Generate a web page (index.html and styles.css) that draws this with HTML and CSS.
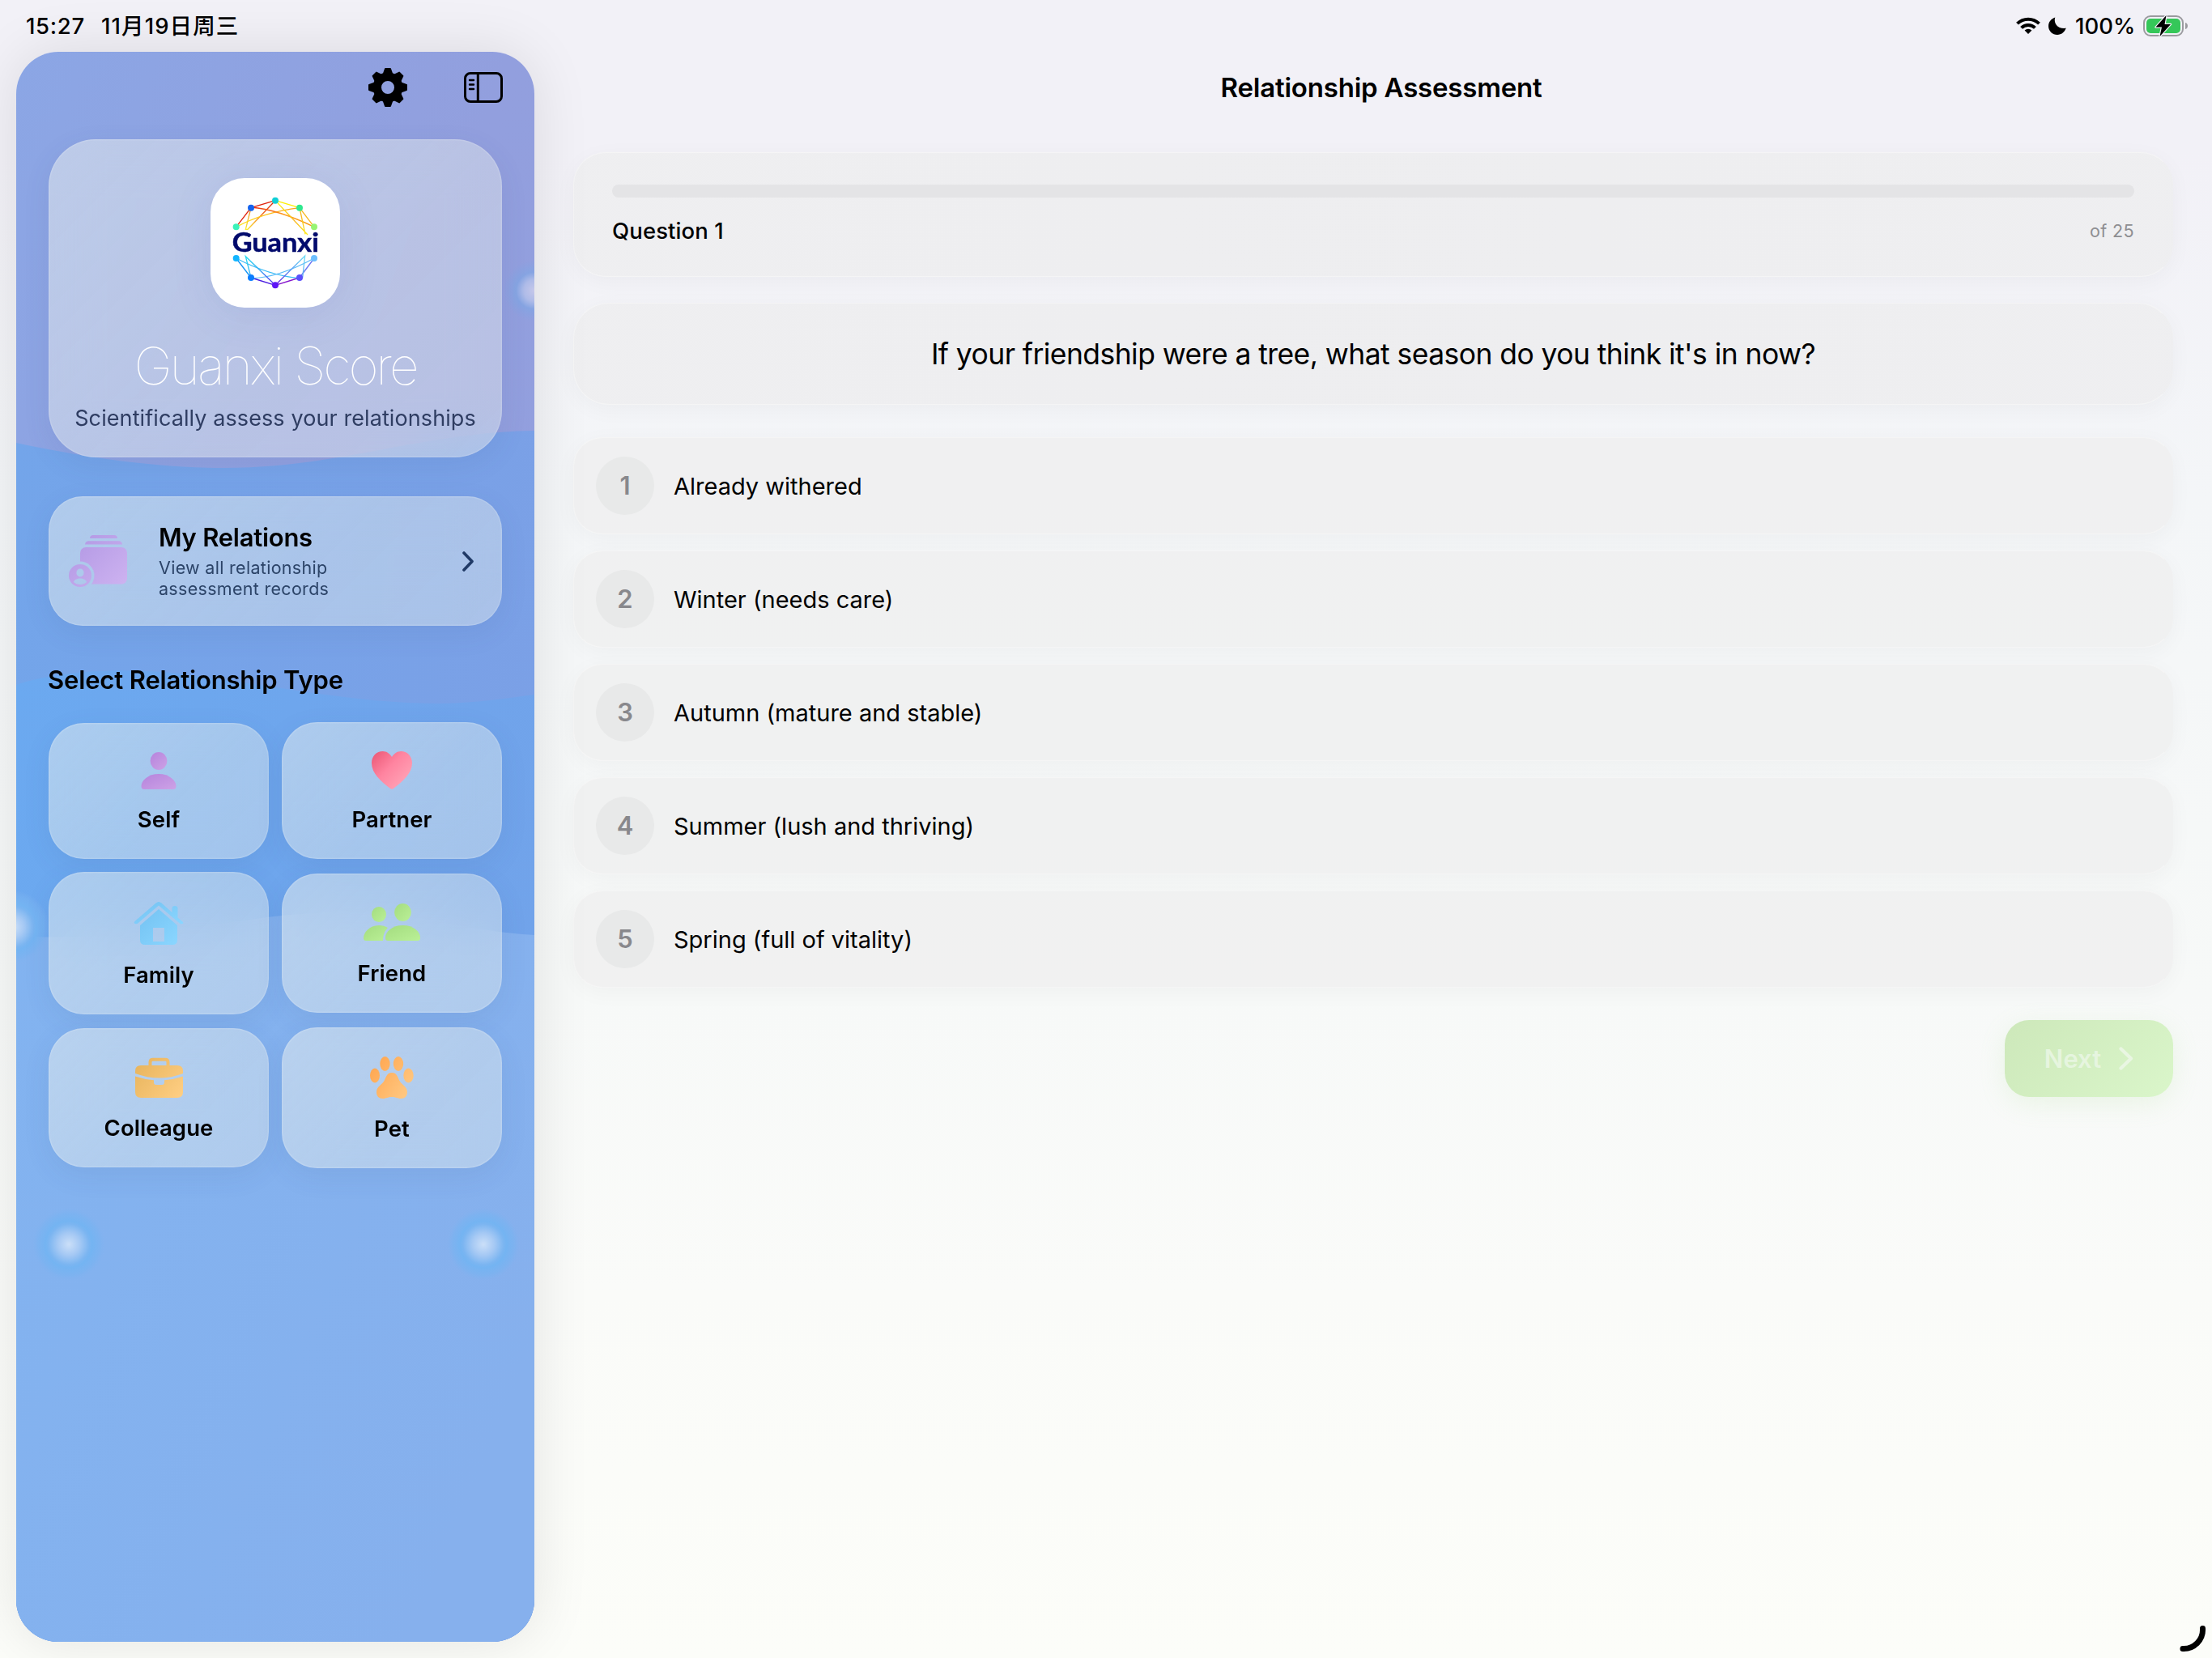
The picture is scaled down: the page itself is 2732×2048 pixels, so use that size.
FILE: index.html
```html
<!DOCTYPE html>
<html lang="en">
<head>
    <meta charset="UTF-8">
    <title>Guanxi Score</title>
    <link rel="stylesheet" href="styles.css">
</head>
<body>

    <!-- Status bar -->
    <header class="status-bar">
        <div class="status-left">
            <span class="status-time">15:27</span>
            <span class="status-date">11月19日周三</span>
        </div>
        <div class="status-right">
            <svg class="wifi" width="30" height="22" viewBox="0 0 30 22">
                <g fill="none" stroke="#000" stroke-width="4">
                    <path d="M1.5 8.2a19.2 19.2 0 0 1 27 0"/>
                    <path d="M6.6 13.4a12 12 0 0 1 16.8 0"/>
                </g>
                <path d="M15 21l-4.4-4.4a6.3 6.3 0 0 1 8.8 0z"/>
            </svg>
            <svg class="moon" width="22" height="22" viewBox="0 0 22 22">
                <path d="M8.3 0.4C6.2 6.800 10 15 21.700 13.800C19.800 18.800 16 22 11 22C5 22 0 17.200 0 11.200C0 6.200 3.200 2 8.300 0.400z"/>
            </svg>
            <span class="battery-text">100%</span>
            <svg class="battery" width="56" height="28" viewBox="0 0 56 28">
                <rect x="1" y="2" width="48" height="24" rx="8" fill="none" stroke="#9b9b9f" stroke-width="2"/>
                <rect x="4" y="5" width="42" height="18" rx="5" fill="#35c759"/>
                <path d="M52 10c4 1 4 7 0 8z" fill="#9b9b9f"/>
                <path d="M28.500 1L15.500 15.500H23L20.500 27L34 12H26.500z" fill="#000" stroke="#f1f0f6" stroke-width="2.400" paint-order="stroke" stroke-linejoin="round"/>
            </svg>
        </div>
    </header>

    <div class="app">

        <!-- Sidebar -->
        <aside class="sidebar">
            <svg class="waves" width="640" height="1964" viewBox="0 0 640 1964">
                <defs>
                    <linearGradient id="wave-top" x1="0" y1="0" x2="1" y2="0.300">
                        <stop offset="0" stop-color="#73a5ea"/>
                        <stop offset="1" stop-color="#7ba0e6"/>
                    </linearGradient>
                    <linearGradient id="wave-mid" x1="0" y1="0" x2="1" y2="0.300">
                        <stop offset="0" stop-color="#6ba9f0"/>
                        <stop offset="1" stop-color="#71a3ea"/>
                    </linearGradient>
                    <linearGradient id="wave-low" x1="0" y1="0" x2="1" y2="0.600">
                        <stop offset="0" stop-color="#82b3f0"/>
                        <stop offset="1" stop-color="#86b0ed"/>
                    </linearGradient>
                    <radialGradient id="glow">
                        <stop offset="0" stop-color="#cbdff8"/>
                        <stop offset="0.300" stop-color="#a6c9f4"/>
                        <stop offset="0.560" stop-color="#7bb5f1"/>
                        <stop offset="0.640" stop-color="#74b4f2"/>
                        <stop offset="0.850" stop-color="#78b3f1" stop-opacity="0.600"/>
                        <stop offset="1" stop-color="#7fb2f0" stop-opacity="0"/>
                    </radialGradient>
                    <radialGradient id="glow-pale">
                        <stop offset="0" stop-color="#c6c8ea"/>
                        <stop offset="0.350" stop-color="#aebbe8"/>
                        <stop offset="0.600" stop-color="#86a4e2"/>
                        <stop offset="1" stop-color="#86a2e2" stop-opacity="0"/>
                    </radialGradient>
                </defs>
                <path d="M0 483C80 500 170 514 257 514C400 514 500 470 640 468V1964H0z" fill="url(#wave-top)"/>
                <path d="M0 782C50 765 130 760 200 768C330 785 430 806 525 805C570 804 610 798 640 794V1964H0z" fill="url(#wave-mid)"/>
                <path d="M0 1092C100 1098 200 1085 310 1069C380 1060 450 1062 510 1072C560 1082 600 1089 640 1091V1964H0z" fill="url(#wave-low)"/>
                <circle cx="65" cy="1473" r="45" fill="url(#glow)"/>
                <circle cx="577" cy="1473" r="45" fill="url(#glow)"/>
                <circle cx="640" cy="295" r="38" fill="url(#glow-pale)"/>
                <circle cx="-4" cy="1081" r="45" fill="url(#glow)"/>
            </svg>

            <div class="sidebar-toolbar">
                <svg width="48" height="48" viewBox="-24 -24 48 48">
                    <circle r="13.200" fill="none" stroke="#000" stroke-width="10.400"/>
                    <g stroke="#000" stroke-width="2" stroke-linejoin="round">
                        <path id="tooth" d="M-5.500 -16L-3 -23H3L5.500 -16z"/>
                        <use href="#tooth" transform="rotate(45)"/>
                        <use href="#tooth" transform="rotate(90)"/>
                        <use href="#tooth" transform="rotate(135)"/>
                        <use href="#tooth" transform="rotate(180)"/>
                        <use href="#tooth" transform="rotate(225)"/>
                        <use href="#tooth" transform="rotate(270)"/>
                        <use href="#tooth" transform="rotate(315)"/>
                    </g>
                </svg>
                <svg width="48" height="38" viewBox="0 0 48 38" fill="none" stroke="#000">
                    <rect x="1.500" y="1.500" width="45" height="35" rx="6.500" stroke-width="3"/>
                    <path d="M17.300 2V36" stroke-width="3"/>
                    <path d="M7 10H12M7 15.500H12M7 21H12" stroke-width="2.400" stroke-linecap="round"/>
                </svg>
            </div>

            <section class="glass hero">
                <div class="app-icon">
                    <svg width="160" height="160" viewBox="60 30 480 480">
                        <defs>
                            <linearGradient id="net-top" gradientUnits="userSpaceOnUse" x1="210" y1="140" x2="444" y2="211">
                                <stop offset="0" stop-color="#e82410"/>
                                <stop offset="0.500" stop-color="#ff9a1c"/>
                                <stop offset="1" stop-color="#f59a10"/>
                            </linearGradient>
                            <linearGradient id="net-red" gradientUnits="userSpaceOnUse" x1="300" y1="113" x2="190" y2="220">
                                <stop offset="0" stop-color="#d41a0c"/>
                                <stop offset="0.450" stop-color="#f36a1e"/>
                                <stop offset="1" stop-color="#fbee30"/>
                            </linearGradient>
                            <linearGradient id="net-gold" gradientUnits="userSpaceOnUse" x1="155" y1="211" x2="390" y2="140">
                                <stop offset="0" stop-color="#ffe61a"/>
                                <stop offset="1" stop-color="#fb9c1a"/>
                            </linearGradient>
                            <linearGradient id="net-yellow" gradientUnits="userSpaceOnUse" x1="300" y1="113" x2="420" y2="240">
                                <stop offset="0" stop-color="#fff500"/>
                                <stop offset="0.600" stop-color="#f7b51c"/>
                                <stop offset="1" stop-color="#ffee20"/>
                            </linearGradient>
                            <linearGradient id="net-blue" gradientUnits="userSpaceOnUse" x1="190" y1="320" x2="300" y2="427">
                                <stop offset="0" stop-color="#2adcf0"/>
                                <stop offset="0.500" stop-color="#3aa6f4"/>
                                <stop offset="1" stop-color="#5a20f0"/>
                            </linearGradient>
                            <linearGradient id="net-violet" gradientUnits="userSpaceOnUse" x1="410" y1="320" x2="300" y2="427">
                                <stop offset="0" stop-color="#6fdcf4"/>
                                <stop offset="0.500" stop-color="#5a98f4"/>
                                <stop offset="1" stop-color="#6a10e0"/>
                            </linearGradient>
                        </defs>
                        <g fill="none" stroke-width="4">
                            <path d="M155 211L210 140L300 113" stroke="#e0240e"/>
                            <path d="M300 113L198 220H190L210 140" stroke="url(#net-red)"/>
                            <path d="M155 211Q260 156 390 140" stroke="url(#net-gold)"/>
                            <path d="M210 138Q310 146 444 211" stroke="url(#net-top)"/>
                            <path d="M300 113L390 140" stroke="#fdf000"/>
                            <path d="M390 140L444 211" stroke="#f8b61a"/>
                            <path d="M300 113L420 240M390 140L411 238" stroke="url(#net-yellow)"/>
                            <path d="M155 327L210 399" stroke="#1594f4"/>
                            <path d="M210 399L300 427" stroke="#4a1ce0"/>
                            <path d="M300 427L390 399" stroke="#8412cc"/>
                            <path d="M390 399L444 327" stroke="#6a78f2"/>
                            <path d="M155 327Q280 392 390 401" stroke="#3cbcf6"/>
                            <path d="M444 327Q310 400 210 401" stroke="#5cbcf8"/>
                            <path d="M300 427L190 320L210 399" stroke="url(#net-blue)"/>
                            <path d="M300 427L410 318L401 399" stroke="url(#net-violet)"/>
                        </g>
                        <circle cx="300" cy="113" r="12" fill="#10cfd6"/>
                        <circle cx="210" cy="140" r="12" fill="#1463ee"/>
                        <circle cx="390" cy="140" r="12" fill="#2fe88e"/>
                        <circle cx="155" cy="211" r="12" fill="#3bf2ba"/>
                        <circle cx="444" cy="211" r="12" fill="#97f472"/>
                        <circle cx="155" cy="327" r="12" fill="#12b5ff"/>
                        <circle cx="210" cy="399" r="12" fill="#0a7dff"/>
                        <circle cx="300" cy="427" r="12" fill="#5e16f6"/>
                        <circle cx="390" cy="399" r="12" fill="#5a4efb"/>
                        <circle cx="444" cy="327" r="12" fill="#6cbfff"/>
                        <text class="logo-text" x="140" y="302" textLength="322" lengthAdjust="spacingAndGlyphs">Guanxi</text>
                    </svg>
                </div>
                <h1>Guanxi Score</h1>
                <p>Scientifically assess your relationships</p>
            </section>

            <section class="glass relations">
                <svg width="72" height="64" viewBox="0 0 72 64">
                    <defs>
                        <linearGradient id="lilac" gradientUnits="userSpaceOnUse" x1="10" y1="0" x2="70" y2="60">
                            <stop offset="0" stop-color="#b298e4"/>
                            <stop offset="1" stop-color="#cdb2f0"/>
                        </linearGradient>
                        <mask id="badge-cut">
                            <rect width="72" height="64" fill="#fff"/>
                            <circle cx="14" cy="50" r="17.500" fill="#000"/>
                        </mask>
                        <mask id="face-cut">
                            <rect width="72" height="64" fill="#fff"/>
                            <ellipse cx="14" cy="46.500" rx="4.600" ry="5" fill="#000"/>
                            <path d="M6 58C7 52 21 52 22 58C18 62 10 62 6 58z" fill="#000"/>
                        </mask>
                    </defs>
                    <g fill="url(#lilac)">
                        <path d="M26 4C26 1.500 27.500 0 30 0H56C58.500 0 60 1.500 60 4z"/>
                        <path d="M20 11.500C20 9 22 7.300 24.500 7.300H61.500C64 7.300 66 9 66 11.500z"/>
                        <rect x="14" y="15" width="58" height="45.500" rx="7" mask="url(#badge-cut)"/>
                        <circle cx="14" cy="50" r="14" mask="url(#face-cut)"/>
                    </g>
                </svg>
                <div class="relations-text">
                    <h2>My Relations</h2>
                    <p>View all relationship<br>assessment records</p>
                </div>
                <svg class="chevron" width="14" height="25" viewBox="0 0 14 25" fill="none">
                    <path d="M2 2L12 12.500L2 23" stroke="#203a66" stroke-width="3.600" stroke-linecap="round" stroke-linejoin="round"/>
                </svg>
            </section>

            <h2 class="section-title">Select Relationship Type</h2>

            <div class="type-grid">
                <div class="glass type-card">
                    <svg width="44" height="46" viewBox="0 0 44 46">
                        <defs>
                            <linearGradient id="purple" x1="0" y1="0" x2="1" y2="1">
                                <stop offset="0" stop-color="#b583dc"/>
                                <stop offset="1" stop-color="#cda2e6"/>
                            </linearGradient>
                        </defs>
                        <g fill="url(#purple)">
                            <ellipse cx="22" cy="11" rx="10.400" ry="11"/>
                            <path d="M0.500 42C0.500 35 9 27 22 27S43.500 35 43.500 42C43.500 45 42 46 40 46H4C2 46 0.500 45 0.500 42z"/>
                        </g>
                    </svg>
                    <span>Self</span>
                </div>
                <div class="glass type-card">
                    <svg width="50" height="47" viewBox="0 0 50 47">
                        <defs>
                            <linearGradient id="pink" x1="0" y1="0.100" x2="0.900" y2="0.900">
                                <stop offset="0" stop-color="#ec5a78"/>
                                <stop offset="0.450" stop-color="#ff84a0"/>
                                <stop offset="1" stop-color="#ffa6b8"/>
                            </linearGradient>
                        </defs>
                        <path d="M25 7C22.500 2.800 18.500 0 13.800 0C6 0 0 6 0 14.500C0 27 11 37 23 46Q25 47.500 27 46C39 37 50 27 50 14.500C50 6 44 0 36.200 0C31.500 0 27.500 2.800 25 7z" fill="url(#pink)"/>
                    </svg>
                    <span>Partner</span>
                </div>
                <div class="glass type-card">
                    <svg width="62" height="54" viewBox="0 0 62 54">
                        <defs>
                            <linearGradient id="sky" x1="0" y1="0" x2="1" y2="1">
                                <stop offset="0" stop-color="#74c2f2"/>
                                <stop offset="1" stop-color="#8ad6ff"/>
                            </linearGradient>
                        </defs>
                        <path d="M31 1Q33 1 34.500 2.500L47.500 14V9Q47.500 6 51 6Q54.500 6 54.500 9V20.500L60.500 25.500Q62.500 27.800 60 28Q58.500 29 56.500 27.300L31 5.500L5.500 27.300Q3.500 29 2 28Q-0.500 27.300 1.500 25L27.500 2.500Q29 1 31 1z" fill="url(#sky)"/>
                        <path d="M31 10L54 30V48Q54 54 48 54H14Q8 54 8 48V30zM24 33V50H38V33z" fill="url(#sky)" fill-rule="evenodd"/>
                    </svg>
                    <span>Family</span>
                </div>
                <div class="glass type-card">
                    <svg width="70" height="50" viewBox="0 0 70 50">
                        <defs>
                            <linearGradient id="green" x1="0" y1="0" x2="1" y2="1">
                                <stop offset="0" stop-color="#a4dc80"/>
                                <stop offset="1" stop-color="#baf096"/>
                            </linearGradient>
                        </defs>
                        <g fill="url(#green)">
                            <ellipse cx="19" cy="14.500" rx="9" ry="9.500"/>
                            <ellipse cx="48.500" cy="12" rx="10.400" ry="11"/>
                            <path d="M0 44C0 37 7 28 19 28C23 28 27 29 30 31C26 35 24 40 24 47H3C1 47 0 46 0 44z"/>
                            <path d="M27 43C27 36 35 28 48.500 28S70 36 70 43C70 46 69 47 67 47H30C28 47 27 46 27 43z"/>
                        </g>
                    </svg>
                    <span>Friend</span>
                </div>
                <div class="glass type-card">
                    <svg width="59" height="50" viewBox="0 0 59 50">
                        <defs>
                            <linearGradient id="gold" gradientUnits="userSpaceOnUse" x1="0" y1="0" x2="59" y2="50">
                                <stop offset="0" stop-color="#e6b25a"/>
                                <stop offset="1" stop-color="#ffcf84"/>
                            </linearGradient>
                        </defs>
                        <path d="M18.500 11V6Q18.500 2.800 22 2.800H37Q40.500 2.800 40.500 6V11" fill="none" stroke="url(#gold)" stroke-width="4"/>
                        <path d="M0 17Q0 10 7 10H52Q59 10 59 17V20Q30 31 0 20z" fill="url(#gold)"/>
                        <path d="M0 23.500Q12 27.500 23 28.300V31Q23 34 26 34H33Q36 34 36 31V28.300Q47 27.500 59 23.500V43Q59 50 52 50H7Q0 50 0 43z" fill="url(#gold)"/>
                    </svg>
                    <span>Colleague</span>
                </div>
                <div class="glass type-card">
                    <svg width="54" height="52" viewBox="0 0 54 52">
                        <defs>
                            <linearGradient id="orange" gradientUnits="userSpaceOnUse" x1="0" y1="8" x2="54" y2="46">
                                <stop offset="0" stop-color="#ffa54e"/>
                                <stop offset="1" stop-color="#ffcb86"/>
                            </linearGradient>
                        </defs>
                        <g fill="url(#orange)">
                            <ellipse cx="18.500" cy="9" rx="6.200" ry="9"/>
                            <ellipse cx="35" cy="9" rx="6.200" ry="9"/>
                            <ellipse cx="6" cy="23.500" rx="6" ry="9"/>
                            <ellipse cx="47.500" cy="23.500" rx="6.200" ry="9"/>
                            <path d="M27 20C33 20 34 25 36.500 30C39 35 46 37 46 44C46 49 43 52 38.500 52C34 52 32 50 27 50S20 52 15.500 52C11 52 8 49 8 44C8 37 15 35 17.500 30C20 25 21 20 27 20z"/>
                        </g>
                    </svg>
                    <span>Pet</span>
                </div>
            </div>
        </aside>

        <!-- Assessment -->
        <main class="content">
            <div class="nav-title">Relationship Assessment</div>

            <section class="panel progress-card">
                <div class="progress-track"></div>
                <div class="progress-labels">
                    <span class="progress-current">Question 1</span>
                    <span class="progress-total">of 25</span>
                </div>
            </section>

            <section class="panel question-card">If your friendship were a tree, what season do you think it's in now?</section>

            <div class="options">
                <div class="panel option"><span class="option-number">1</span><span>Already withered</span></div>
                <div class="panel option"><span class="option-number">2</span><span>Winter (needs care)</span></div>
                <div class="panel option"><span class="option-number">3</span><span>Autumn (mature and stable)</span></div>
                <div class="panel option"><span class="option-number">4</span><span>Summer (lush and thriving)</span></div>
                <div class="panel option"><span class="option-number">5</span><span>Spring (full of vitality)</span></div>
            </div>

            <button class="next-button">
                <span>Next</span>
                <svg width="18" height="29" viewBox="0 0 18 29" fill="none">
                    <path d="M2.500 2.500L15 14.500L2.500 26.500" stroke="#e9f6e2" stroke-width="4.200" stroke-linecap="round" stroke-linejoin="round"/>
                </svg>
            </button>
        </main>
    </div>

    <!-- Corner handle -->
    <svg class="corner-handle" width="36" height="36" viewBox="0 0 36 36" fill="none">
        <path d="M28.500 6.500A23.500 23.500 0 0 1 4 31.500" stroke="#000" stroke-width="7" stroke-linecap="round"/>
    </svg>

</body>
</html>
```

FILE: styles.css
```css
* {
    box-sizing: border-box;
}

body {
    margin: 0;
    width: 2732px;
    height: 2048px;
    overflow: hidden;
    position: relative;
    font-family: Inter, "Noto Sans CJK SC", sans-serif;
    color: #000;
    background: linear-gradient(180deg, #f2f1f7 0%, #f2f1f7 9%, #f4f6f8 30%, #f7f9f8 60%, #fafbf9 78%, #fcfdf9 100%);
}

h1, h2, p {
    margin: 0;
}

svg {
    display: block;
    flex-shrink: 0;
}

/* Status bar */
.status-bar {
    height: 64px;
    padding: 0 29px 0 32px;
    display: flex;
    justify-content: space-between;
    align-items: center;
    font-size: 27.5px;
    font-weight: 500;
    line-height: 64px;
}

.status-left, .status-right {
    display: flex;
    align-items: center;
}

.status-time {
    width: 93px;
    letter-spacing: 0.7px;
}

.status-date {
    letter-spacing: 1.1px;
}

.moon {
    margin: 0 11px 0 10px;
}

.battery-text {
    width: 84px;
    letter-spacing: 0;
}

.app {
    display: flex;
    height: 1984px;
    padding: 0 0 20px 20px;
}

/* Sidebar */
.sidebar {
    position: relative;
    width: 640px;
    height: 1964px;
    padding: 0 40px;
    border-radius: 52px;
    overflow: hidden;
    background: linear-gradient(110deg, #8ba6e5 0%, #929fde 45%, #939edd 100%);
    box-shadow: 0 0 70px rgba(0, 0, 0, 0.1);
    flex-shrink: 0;
}

.waves {
    position: absolute;
    top: 0;
    left: 0;
}

.sidebar-toolbar {
    position: relative;
    height: 88px;
    margin-right: -1px;
    display: flex;
    justify-content: flex-end;
    align-items: center;
    gap: 70px;
}

.glass {
    position: relative;
    background: linear-gradient(135deg, rgba(240, 243, 238, 0.49), rgba(236, 240, 236, 0.43) 60%, rgba(236, 240, 236, 0.42));
    backdrop-filter: blur(30px);
    box-shadow: inset 0 0 0 1.5px rgba(255, 255, 255, 0.12), 0 10px 34px rgba(60, 80, 130, 0.09);
}

.hero {
    height: 393px;
    margin-top: 20px;
    padding-top: 48px;
    border-radius: 58px;
    display: flex;
    flex-direction: column;
    align-items: center;
}

.app-icon {
    width: 160px;
    height: 160px;
    border-radius: 42px;
    background: #fff;
    box-shadow: 0 8px 50px rgba(80, 100, 180, 0.12);
}

.logo-text {
    font-family: Lato, sans-serif;
    font-size: 95px;
    font-weight: 700;
    fill: #020a6c;
    stroke: #020a6c;
    stroke-width: 1.5px;
}

.hero h1 {
    margin-top: 34px;
    font-size: 64px;
    line-height: 76px;
    font-weight: 100;
    letter-spacing: -3.1px;
    color: #fff;
    white-space: nowrap;
}

.hero p {
    margin-top: 9px;
    font-size: 27px;
    line-height: 36px;
    letter-spacing: 0.09px;
    color: #2f3d62;
    white-space: nowrap;
}

.relations {
    height: 160px;
    margin-top: 48px;
    padding: 0 35px 0 25px;
    border-radius: 42px;
    display: flex;
    align-items: center;
}

.relations-text {
    flex: 1;
    margin: -2px 0 0 39px;
}

.relations h2 {
    font-size: 31px;
    line-height: 38px;
    font-weight: 600;
    letter-spacing: -0.25px;
}

.relations p {
    margin-top: 5px;
    font-size: 21.5px;
    line-height: 26px;
    letter-spacing: 0.3px;
    color: #2c4468;
}

.section-title {
    position: relative;
    margin: 47px 0 0 -1px;
    font-size: 31px;
    line-height: 40px;
    font-weight: 600;
    letter-spacing: -0.15px;
    white-space: nowrap;
}

.type-grid {
    margin-top: 32px;
    display: grid;
    grid-template-columns: 272px 272px;
    gap: 16px;
    align-items: center;
}

.type-card {
    padding: 36px 0 32px;
    border-radius: 44px;
    display: flex;
    flex-direction: column;
    align-items: center;
    gap: 20px;
}

.type-card span {
    font-size: 27.5px;
    line-height: 34px;
    font-weight: 600;
    letter-spacing: 0.1px;
}

/* Assessment */
.content {
    flex: 1;
    padding: 0 48px;
    display: flex;
    flex-direction: column;
}

.nav-title {
    height: 88px;
    padding-left: 20px;
    line-height: 88px;
    text-align: center;
    font-size: 33px;
    font-weight: 600;
    letter-spacing: -0.2px;
}

.panel {
    background: linear-gradient(90deg, rgba(238, 238, 239, 0.9), rgba(237, 237, 238, 0.9) 50%, rgba(238, 238, 239, 0.9));
    border: 1.5px solid rgba(255, 255, 255, 0.35);
    border-right-color: transparent;
    box-shadow: 0 6px 28px rgba(0, 0, 0, 0.035);
}

.progress-card {
    height: 154px;
    margin-top: 36px;
    padding: 39px 47px 0;
    border-radius: 40px;
}

.progress-track {
    height: 16px;
    border-radius: 8px;
    background: #e4e4e6;
}

.progress-labels {
    margin-top: 24px;
    display: flex;
    justify-content: space-between;
    align-items: center;
    line-height: 34px;
}

.progress-current {
    font-size: 27.5px;
    font-weight: 500;
    letter-spacing: 0.1px;
}

.progress-total {
    font-size: 21.5px;
    letter-spacing: 0.4px;
    color: #8e8e92;
}

.question-card {
    height: 126px;
    margin-top: 32px;
    border-radius: 44px;
    display: flex;
    justify-content: center;
    align-items: center;
    font-size: 35.5px;
    letter-spacing: -0.57px;
    white-space: nowrap;
}

.options {
    margin-top: 40px;
    display: flex;
    flex-direction: column;
    gap: 20px;
}

.option {
    height: 120px;
    padding: 0 27px;
    border-radius: 36px;
    display: flex;
    align-items: center;
    gap: 24px;
    font-size: 29px;
    letter-spacing: 0;
    background: rgba(239, 240, 240, 0.9);
}

.option-number {
    width: 72px;
    height: 72px;
    border-radius: 50%;
    background: #e8e9e9;
    color: #88888c;
    font-size: 31px;
    font-weight: 600;
    line-height: 72px;
    text-align: center;
}

.next-button {
    align-self: flex-end;
    width: 208px;
    height: 95px;
    margin-top: 40px;
    padding: 0;
    border: none;
    border-radius: 30px;
    display: flex;
    justify-content: center;
    align-items: center;
    gap: 22px;
    font-family: inherit;
    font-size: 31px;
    font-weight: 600;
    color: #e6f5df;
    background: linear-gradient(135deg, #cde8ba, #daf6ca);
    box-shadow: 0 8px 32px rgba(160, 220, 130, 0.16);
}

.corner-handle {
    position: absolute;
    right: 0;
    bottom: 0;
    transform: translate(-4px, -7px);
}
```
